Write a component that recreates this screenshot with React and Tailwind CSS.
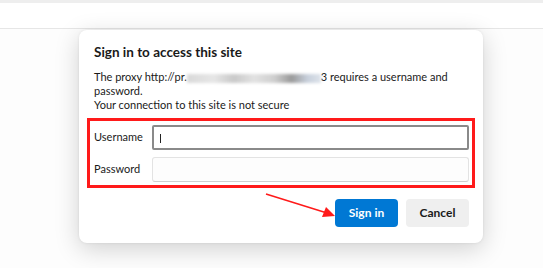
export default function App() {
  const font = { fontFamily: 'Lato, "Noto Sans", "Liberation Sans", sans-serif' };
  return (
    <div className="relative h-[268px] w-[543px] overflow-hidden bg-[#fdfdfd]" style={font}>
      <div className="h-[3px] bg-[#eeeeee]" />
      <div className="h-[26px] bg-white border-b border-[#e6e6e6]" />
      <div className="absolute left-[79px] top-[30px] w-[404px] h-[213px] rounded-[8px] bg-white shadow-[0_6px_24px_rgba(0,0,0,0.18),0_0_3px_rgba(0,0,0,0.08)] flex flex-col">
        <div className="pl-[15px] pr-[12px] pt-[13px]">
          <h1 className="text-[13.5px] font-bold leading-[18px] text-[#1a1a1a] whitespace-nowrap">Sign in to access this site</h1>
          <p className="mt-[9px] text-[11px] leading-[14px] text-[#1a1a1a] whitespace-nowrap">
            The proxy http://pr.
            <span className="inline-block align-middle h-[9px] w-[134px] blur-[1.5px] bg-[linear-gradient(90deg,#d9d9d9_0%,#e6e6e6_20%,#c9c9c9_35%,#e2e2e2_50%,#cfcfcf_65%,#9a9a9a_78%,#c8d0dc_90%,#dde3ea_100%)]" />
            3 requires a username and
            <br />
            password.
            <br />
            Your connection to this site is not secure
          </p>
        </div>
        <div className="ml-[8px] mt-[6px] w-[388px] h-[70px] border-[3px] border-[#ff1a1a] flex flex-col justify-center gap-[7px] pl-[4px] pr-[3px]">
          <div className="flex items-center h-[25px]">
            <span className="w-[58px] text-[11px] text-[#1a1a1a]">Username</span>
            <div className="relative flex-1 h-[25px] rounded-[2px] border-2 border-[#8a8a8a] bg-white">
              <div className="absolute left-[6px] top-[7px] h-[9px] w-px bg-[#222]" />
            </div>
          </div>
          <div className="flex items-center h-[25px]">
            <span className="w-[58px] text-[11px] text-[#1a1a1a]">Password</span>
            <div className="flex-1 h-[25px] rounded-[3px] border border-[#e3e3e3] border-b-[#cfcfcf] bg-[#fdfdfd]" />
          </div>
        </div>
        <div className="relative mt-[11px] flex justify-end gap-[8px] pr-[14px]">
          <svg className="absolute left-[186px] top-[-6px]" width="72" height="28" viewBox="0 0 72 28">
            <line x1="1" y1="1" x2="62" y2="20" stroke="#ff1a1a" strokeWidth="1.6" />
            <polygon points="70,23 57,24 61,14" fill="#ff1a1a" />
          </svg>
          <button className="w-[63px] h-[28px] rounded-[4px] bg-[#0078d4] text-white text-[12px] font-bold">Sign in</button>
          <button className="w-[63px] h-[28px] rounded-[4px] bg-[#efefef] text-[#1a1a1a] text-[12px] font-bold">Cancel</button>
        </div>
      </div>
    </div>
  );
}
